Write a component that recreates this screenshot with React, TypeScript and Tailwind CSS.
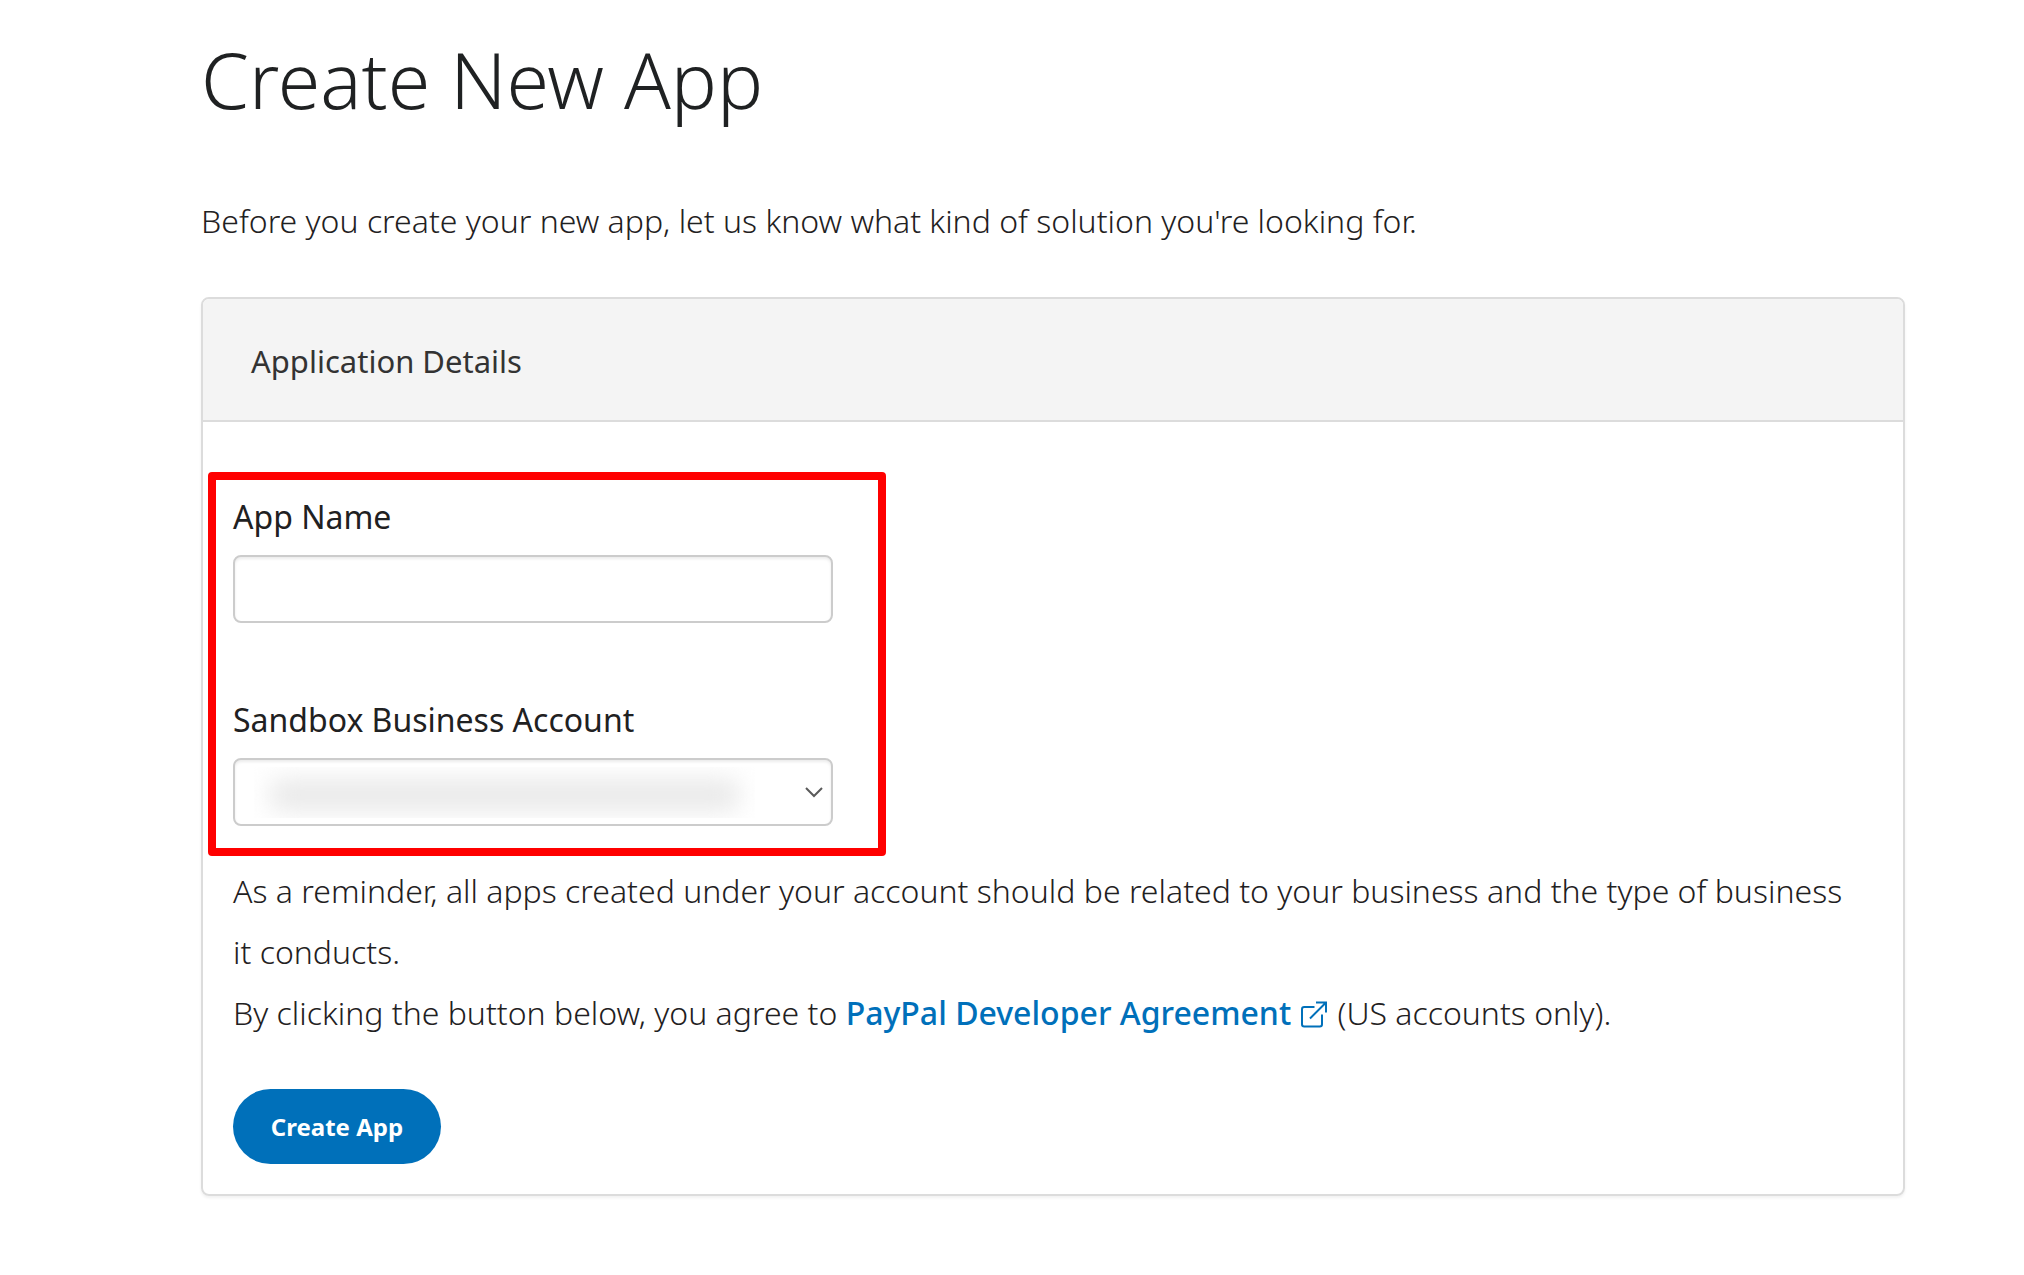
function ExternalLinkIcon() {
  return (
    <svg
      aria-hidden="true"
      viewBox="0 0 26 27"
      className="mr-0.5 ml-2.5 inline-block h-[27px] w-[26px] align-[-3px]"
      fill="none"
      stroke="currentColor"
      strokeWidth="2"
    >
      <path d="M13.500 6H3.200Q1 6 1 8.200V23.300Q1 25.500 3.200 25.500H18.800Q21 25.500 21 23.300V13.500" />
      <path d="M15 1.500H25V11.500M24.500 2L9 17.500" />
    </svg>
  );
}

function ChevronIcon() {
  return (
    <svg
      aria-hidden="true"
      viewBox="0 0 18 11"
      className="pointer-events-none absolute top-[29px] right-[10px] h-[11px] w-[18px]"
      fill="none"
      stroke="#5a5a5a"
      strokeWidth="2"
    >
      <path d="M1 1L9 9L17 1" />
    </svg>
  );
}

function RedactedValue() {
  return (
    <div
      aria-hidden="true"
      className="pointer-events-none absolute top-[9px] left-[21px] h-[51px] w-[501px] overflow-hidden"
    >
      <div className="mx-[16px] mt-[12px] h-[32px] rounded-lg bg-[#e9e9e9] blur-[12px]" />
    </div>
  );
}

export default function App() {
  return (
    <main
      className="bg-white pt-[28px] pr-[119px] pb-[79px] pl-[201px] font-['Noto_Sans',sans-serif] text-[32px] text-[#1f2122]"
    >
      <h1 className="text-[77px] leading-[104px] font-light">Create New App</h1>
      <p className="mt-[58px] leading-[61px] font-light">
        Before you create your new app, let us know what kind of solution you're looking for.
      </p>

      <section className="mt-[46px] overflow-hidden rounded-lg border-2 border-[#dcdcdc] shadow-[0_2px_3px_rgba(0,0,0,0.06)]">
        <h2 className="border-b-2 border-[#dcdcdc] bg-[#f4f4f4] px-12 pt-[38px] pb-[35px] text-[31px] leading-[48px] text-[#333333]">
          Application Details
        </h2>

        <form className="pt-[50px] pb-[30px]" onSubmit={(e) => e.preventDefault()}>
          <div className="ml-[5px] w-[678px] max-w-full rounded-[4px] border-8 border-[#ff0000] pt-[13px] pr-[45px] pb-[22px] pl-[17px]">
            <label htmlFor="app-name" className="block leading-[48px]">
              App Name
            </label>
            <input
              id="app-name"
              type="text"
              className="mt-[14px] block h-[68px] w-full rounded-lg border-2 border-[#cccccc] bg-white px-4 text-[24px] shadow-[inset_0_2px_3px_rgba(0,0,0,0.08)]"
            />

            <label htmlFor="sandbox-account" className="mt-[73px] block leading-[48px]">
              Sandbox Business Account
            </label>
            <div className="relative mt-[14px]">
              <select
                id="sandbox-account"
                className="block h-[68px] w-full appearance-none rounded-lg border-2 border-[#cccccc] bg-white px-4 text-[24px] shadow-[inset_0_2px_3px_rgba(0,0,0,0.08)]"
              >
                <option value="" />
              </select>
              <RedactedValue />
              <ChevronIcon />
            </div>
          </div>

          <div className="mt-1 pr-10 pl-[30px]">
            <p className="leading-[61px] font-light">
              As a reminder, all apps created under your account should be related to your business
              and the type of business it conducts.
            </p>
            <p className="leading-[61px] font-light">
              By clicking the button below, you agree to{" "}
              <a href="#agreement" className="font-medium text-[#0070ba]">
                PayPal Developer Agreement
                <ExternalLinkIcon />
              </a>{" "}
              (US accounts only).
            </p>
            <button
              type="submit"
              className="mt-[46px] block h-[75px] w-[208px] rounded-full bg-[#0070ba] text-[24px] font-bold text-white"
            >
              Create App
            </button>
          </div>
        </form>
      </section>
    </main>
  );
}
